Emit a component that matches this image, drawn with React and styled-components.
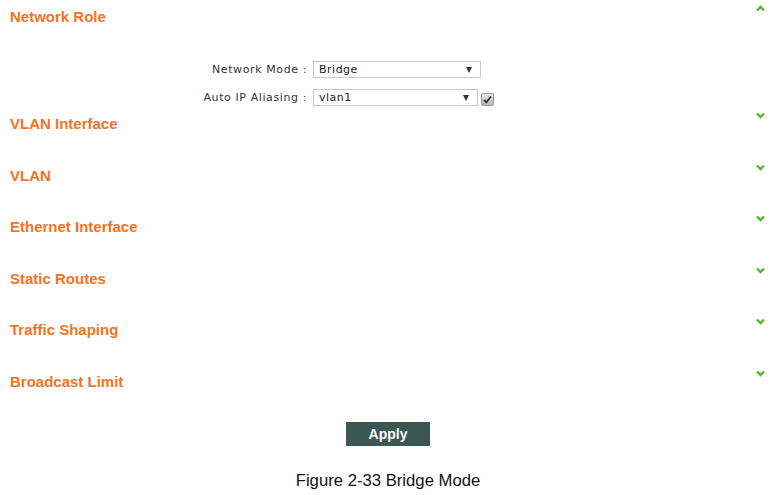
import styled, { createGlobalStyle } from "styled-components";

const GlobalStyle = createGlobalStyle`
  body {
    margin: 0;
    background: #ffffff;
    font-family: "Liberation Sans", Arial, sans-serif;
  }
`;

const Page = styled.div`
  width: 784px;
  height: 495px;
  background: #fff;
  overflow: hidden;
`;

const Section = styled.div`
  height: ${({ $open }) => ($open ? "107px" : "51.5px")};
`;

const Header = styled.div`
  display: flex;
  justify-content: space-between;
  align-items: flex-start;
  padding: 8px 19px 0 10px;
  height: 24px;
`;

const Title = styled.h3`
  margin: 0;
  font-size: 15px;
  line-height: 18px;
  font-weight: bold;
  color: #f4731f;
`;

const Chevron = styled.svg`
  width: 9px;
  height: 7px;
  margin-top: -3px;
`;

const Form = styled.div`
  display: grid;
  grid-template-columns: 307px auto;
  column-gap: 6px;
  row-gap: 11px;
  padding-top: 29px;
  align-items: center;
`;

const Label = styled.span`
  text-align: right;
  font-family: "DejaVu Sans", Verdana, sans-serif;
  font-size: 11px;
  letter-spacing: 0.6px;
  color: #333;
`;

const Field = styled.div`
  display: flex;
  align-items: center;
  gap: 3px;
`;

const SelectBox = styled.div`
  box-sizing: border-box;
  width: ${({ $w }) => $w}px;
  height: 17px;
  border: 1px solid #c8c8c8;
  background: #fff;
  display: flex;
  align-items: center;
  justify-content: space-between;
  padding: 0 8px 0 5px;
  font-family: "DejaVu Sans", Verdana, sans-serif;
  font-size: 11px;
  letter-spacing: 0.5px;
  color: #222;
`;

const Arrow = styled.span`
  width: 0;
  height: 0;
  border-left: 3px solid transparent;
  border-right: 3px solid transparent;
  border-top: 6px solid #333;
`;

const Check = styled.svg`
  width: 13px;
  height: 13px;
  margin-top: 4px;
`;

const Actions = styled.div`
  display: flex;
  justify-content: center;
  padding: 6px 8px 0 0;
`;

const ApplyButton = styled.button`
  width: 84px;
  height: 24px;
  border: none;
  background: #3b5753;
  color: #fff;
  font-family: "Liberation Sans", Arial, sans-serif;
  font-weight: bold;
  font-size: 14px;
  padding: 0;
`;

const Caption = styled.p`
  margin: 26px 8px 0 0;
  text-align: center;
  font-size: 16.7px;
  line-height: 18px;
  color: #111;
`;

const ChevronIcon = ({ up }) => (
  <Chevron viewBox="0 0 9 7">
    <path
      d={up ? "M1 5.5 L4.5 2 L8 5.5" : "M1 1.5 L4.5 5 L8 1.5"}
      fill="none"
      stroke="#52b62a"
      strokeWidth="2.3"
    />
  </Chevron>
);

const sections = [
  "VLAN Interface",
  "VLAN",
  "Ethernet Interface",
  "Static Routes",
  "Traffic Shaping",
  "Broadcast Limit",
];

export default function App() {
  return (
    <Page>
      <GlobalStyle />
      <Section $open>
        <Header>
          <Title>Network Role</Title>
          <ChevronIcon up />
        </Header>
        <Form>
          <Label>Network Mode :</Label>
          <Field>
            <SelectBox $w={168}>
              Bridge <Arrow />
            </SelectBox>
          </Field>
          <Label>Auto IP Aliasing :</Label>
          <Field>
            <SelectBox $w={165}>
              vlan1 <Arrow />
            </SelectBox>
            <Check viewBox="0 0 13 13">
              <defs>
                <linearGradient id="cb" x1="0" y1="0" x2="0" y2="1">
                  <stop offset="0" stopColor="#e8e8e8" />
                  <stop offset="1" stopColor="#b8b8b8" />
                </linearGradient>
              </defs>
              <rect x="0.5" y="0.5" width="12" height="12" rx="1.5" fill="url(#cb)" stroke="#999" />
              <path d="M3 7 L5.3 9.3 L10 3.5" fill="none" stroke="#333" strokeWidth="1.8" />
            </Check>
          </Field>
        </Form>
      </Section>
      {sections.map((s) => (
        <Section key={s}>
          <Header>
            <Title>{s}</Title>
            <ChevronIcon />
          </Header>
        </Section>
      ))}
      <Actions>
        <ApplyButton>Apply</ApplyButton>
      </Actions>
      <Caption>Figure 2-33 Bridge Mode</Caption>
    </Page>
  );
}
